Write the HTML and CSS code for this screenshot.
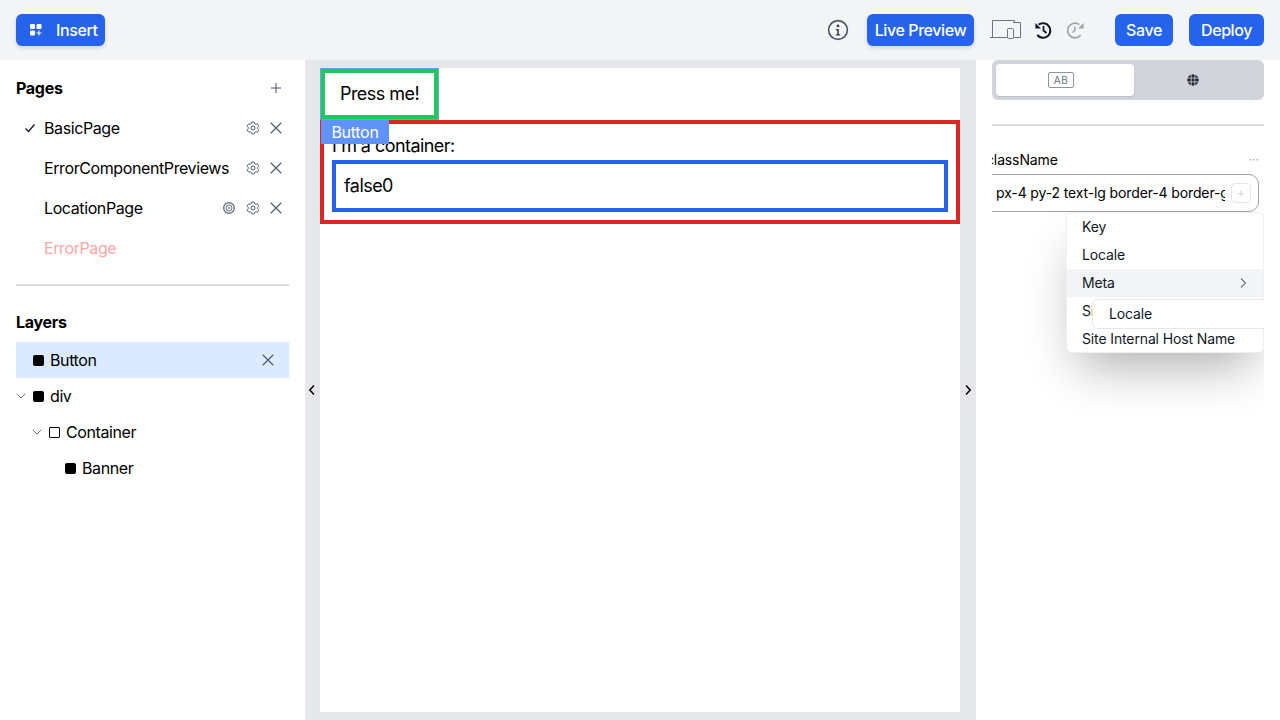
FILE: index.html
```html
<!DOCTYPE html>
<html lang="en">
<head>
<meta charset="utf-8">
<title>Page Builder</title>
<link rel="stylesheet" href="styles.css">
</head>
<body>
<svg class="defs" width="0" height="0" aria-hidden="true">
  <defs>
    <symbol id="i-gear" viewBox="0 0 24 24"><path fill="none" stroke="currentColor" stroke-width="1.5" stroke-linecap="round" stroke-linejoin="round" d="M9.594 3.94c.09-.542.56-.94 1.11-.94h2.593c.55 0 1.02.398 1.11.94l.213 1.281c.063.374.313.686.645.87.074.04.147.083.22.127.325.196.72.257 1.075.124l1.217-.456a1.125 1.125 0 0 1 1.37.49l1.296 2.247a1.125 1.125 0 0 1-.26 1.431l-1.003.827c-.293.241-.438.613-.43.992a7.723 7.723 0 0 1 0 .255c-.008.378.137.75.43.991l1.004.827c.424.35.534.955.26 1.43l-1.298 2.247a1.125 1.125 0 0 1-1.369.491l-1.217-.456c-.355-.133-.75-.072-1.076.124a6.47 6.47 0 0 1-.22.128c-.331.183-.581.495-.644.869l-.213 1.281c-.09.543-.56.94-1.11.94h-2.594c-.55 0-1.019-.398-1.11-.94l-.213-1.281c-.062-.374-.312-.686-.644-.87a6.52 6.52 0 0 1-.22-.127c-.325-.196-.72-.257-1.076-.124l-1.217.456a1.125 1.125 0 0 1-1.369-.49l-1.297-2.247a1.125 1.125 0 0 1 .26-1.431l1.004-.827c.292-.24.437-.613.43-.991a6.932 6.932 0 0 1 0-.255c.007-.38-.138-.751-.43-.992l-1.004-.827a1.125 1.125 0 0 1-.26-1.43l1.297-2.247a1.125 1.125 0 0 1 1.37-.491l1.216.456c.356.133.751.072 1.076-.124.072-.044.146-.086.22-.128.332-.183.582-.495.644-.869l.214-1.28Z"/><path fill="none" stroke="currentColor" stroke-width="1.5" d="M15 12a3 3 0 1 1-6 0 3 3 0 0 1 6 0Z"/></symbol>
    <symbol id="i-x" viewBox="0 0 14 14"><path fill="none" stroke="currentColor" stroke-width="1.1" stroke-linecap="round" d="M2 2l10 10M12 2L2 12"/></symbol>
    <symbol id="i-chev" viewBox="0 0 12 12"><path fill="none" stroke="currentColor" stroke-width="1" stroke-linecap="round" stroke-linejoin="round" d="M2 4l4 4 4-4"/></symbol>
  </defs>
</svg>
<header class="topbar">
  <button class="btn btn-shadow btn-insert">
    <svg class="ico-insert" viewBox="0 0 12 12" width="12" height="12"><rect x="0" y="0" width="5" height="5" rx="1.1" fill="#fff"/><rect x="6.500" y="0" width="5" height="5" rx="1.1" fill="#fff"/><rect x="0" y="6.500" width="5" height="5" rx="1.1" fill="#fff"/><path d="M9 6.500v5M6.500 9h5" stroke="#fff" stroke-width="1.100"/></svg>
    <span>Insert</span>
  </button>
  <div class="topbar-right">
    <svg class="ico-info" viewBox="0 0 22 22" width="22" height="22"><circle cx="11" cy="11" r="9.400" fill="none" stroke="#4b5563" stroke-width="1.600"/><circle cx="11" cy="6.900" r="1.400" fill="#374151"/><path d="M8.800 10h3v5.200h1.400v1.200H8.800v-1.200h1.400V11.200H8.800z" fill="#374151"/></svg>
    <button class="btn btn-shadow btn-live">Live Preview</button>
    <svg class="ico-devices" viewBox="0 1 31 21" width="31" height="21"><path d="M2.500 18V1.500h22V4M0 18.500h17" fill="none" stroke="#6b7280" stroke-width="1"/><path d="M23 3.500h7.500v15H23" fill="none" stroke="#6b7280" stroke-width="1"/><rect x="17.500" y="9.500" width="6" height="10" rx="1" fill="#f3f4f6" stroke="#6b7280" stroke-width="1"/></svg>
    <svg class="ico-clock" viewBox="0 0 20 20" width="20" height="20"><path d="M5.600 4.700A7.300 7.300 0 1 1 4.300 15" fill="none" stroke="#111827" stroke-width="2.100"/><path d="M2.400 3v5.600H8z" fill="#111827"/><path d="M10.500 6v4.500l3 2.500" fill="none" stroke="#111827" stroke-width="1.800"/></svg>
    <svg class="ico-clock" viewBox="0 0 20 20" width="20" height="20"><path d="M14.400 4.700A7.300 7.300 0 1 0 15.700 15" fill="none" stroke="#9ca3af" stroke-width="1.700"/><path d="M18.600 3v5.600H13z" fill="#9ca3af"/><path d="M9.800 6.500v4l-2.500 2" fill="none" stroke="#9ca3af" stroke-width="1.500"/></svg>
    <button class="btn btn-save">Save</button>
    <button class="btn btn-deploy">Deploy</button>
  </div>
</header>

<main class="workspace">
  <aside class="left">
    <div class="section-head">
      <h2>Pages</h2>
      <svg class="plus" viewBox="0 0 12 12" width="12" height="12"><path d="M6 1v10M1 6h10" stroke="#4b5563" stroke-width="1" fill="none"/></svg>
    </div>
    <ul class="pages">
      <li class="page">
        <svg class="check" viewBox="0 0 12 12" width="12" height="12"><path d="M1.500 6.500l3 3 6-7" fill="none" stroke="#111827" stroke-width="1.300"/></svg>
        <span class="page-name">BasicPage</span>
        <svg class="gear"><use href="#i-gear"/></svg>
        <svg class="x"><use href="#i-x"/></svg>
      </li>
      <li class="page">
        <span class="page-name">ErrorComponentPreviews</span>
        <svg class="gear"><use href="#i-gear"/></svg>
        <svg class="x"><use href="#i-x"/></svg>
      </li>
      <li class="page">
        <span class="page-name">LocationPage</span>
        <svg class="target" viewBox="0 0 12 12" width="12" height="12"><circle cx="6" cy="6" r="5.300" fill="none" stroke="#6b7280" stroke-width="1.400"/><circle cx="6" cy="6" r="3" fill="none" stroke="#6b7280" stroke-width="1"/><circle cx="6" cy="6" r="1.200" fill="#9ca3af"/></svg>
        <svg class="gear"><use href="#i-gear"/></svg>
        <svg class="x"><use href="#i-x"/></svg>
      </li>
      <li class="page page-error">
        <span class="page-name">ErrorPage</span>
      </li>
    </ul>
    <div class="rule"></div>
    <div class="section-head layers-head"><h2>Layers</h2></div>
    <ul class="layers">
      <li class="layer depth-0 selected"><span class="sq"></span><span class="layer-name">Button</span><svg class="x x-layer"><use href="#i-x"/></svg></li>
      <li class="layer depth-0"><svg class="chev"><use href="#i-chev"/></svg><span class="sq"></span><span class="layer-name">div</span></li>
      <li class="layer depth-1"><svg class="chev"><use href="#i-chev"/></svg><span class="sq sq-open"></span><span class="layer-name">Container</span></li>
      <li class="layer depth-2"><span class="sq"></span><span class="layer-name">Banner</span></li>
    </ul>
  </aside>

  <section class="canvas">
    <div class="rail rail-left">
      <svg viewBox="0 0 10 12" width="10" height="12"><path d="M7 1.500L2.800 6 7 10.500" fill="none" stroke="#000" stroke-width="1.500"/></svg>
    </div>
    <div class="page-frame">
      <button class="press">Press me!</button>
      <div class="red-box">
        <div class="container-text">I'm a container:</div>
        <div class="blue-box">false0</div>
      </div>
      <div class="sel-label">Button</div>
    </div>
    <div class="rail">
      <svg viewBox="0 0 10 12" width="10" height="12"><path d="M3 1.500L7.200 6 3 10.500" fill="none" stroke="#000" stroke-width="1.500"/></svg>
    </div>
  </section>

  <aside class="right">
    <div class="tabs">
      <div class="tab tab-active"><span class="ab">AB</span></div>
      <div class="tab">
        <svg viewBox="0 0 12 12" width="12" height="12"><circle cx="6" cy="6" r="5.800" fill="#1f2937"/><path d="M0 4.100h12M0 7.900h12M4.200 0v12M7.800 0v12" stroke="#d1d5db" stroke-width=".8" fill="none"/></svg>
      </div>
    </div>
    <div class="rule rule-right"></div>
    <div class="field">
      <div class="field-head"><span class="field-label">className</span><span class="dots">···</span></div>
      <div class="input-clip">
        <div class="input">
          <span class="input-text">px-4 py-2 text-lg border-4 border-green-500</span>
          <span class="input-add">+</span>
        </div>
      </div>
      <div class="menu">
        <div class="menu-row">Key</div>
        <div class="menu-row">Locale</div>
        <div class="menu-row menu-hover">Meta
          <svg viewBox="0 0 10 12" width="10" height="12"><path d="M3 1.500L7.500 6 3 10.500" fill="none" stroke="#6b7280" stroke-width="1.100"/></svg>
        </div>
        <div class="menu-row">Site</div>
        <div class="menu-row">Site Internal Host Name</div>
        <div class="submenu">Locale</div>
      </div>
    </div>
  </aside>
</main>
</body>
</html>
```
FILE: styles.css
```css
* { box-sizing: border-box; }
html, body { margin: 0; height: 100%; }
body {
  width: 1280px;
  height: 720px;
  overflow: hidden;
  background: #fff;
  color: #000;
  font-family: Inter, "Liberation Sans", sans-serif;
  font-size: 16px;
  line-height: 24px;
  letter-spacing: -.4px;
}
.defs { position: absolute; }
h2 { margin: 0; font-size: 16px; font-weight: 700; line-height: 24px; letter-spacing: -.3px; }
ul { list-style: none; margin: 0; padding: 0; }
button { font: inherit; letter-spacing: inherit; cursor: pointer; }

.topbar {
  height: 60px;
  background: #f3f4f6;
  display: flex;
  align-items: center;
  justify-content: space-between;
  padding: 0 16px;
}
.topbar-right { display: flex; align-items: center; }
.btn {
  height: 32px;
  border: 0;
  border-radius: 6px;
  background: #2563eb;
  color: #fff;
  font-weight: 500;
  padding: 0;
  display: flex;
  align-items: center;
  white-space: nowrap;
}
.btn-shadow { box-shadow: 0 2px 4px rgba(0,0,0,.14); }
.btn-insert { width: 89px; padding-left: 14px; }
.ico-insert { flex-shrink: 0; margin-right: 14px; }
.ico-info { margin-right: 18px; }
.btn-live { width: 107px; justify-content: center; }
.ico-devices { margin-left: 16px; }
.ico-clock { margin-left: 12px; }
.btn-save { margin-left: 30px; width: 58px; justify-content: center; }
.btn-deploy { margin-left: 16px; width: 75px; justify-content: center; }

.workspace {
  height: 660px;
  display: grid;
  grid-template-columns: 305px 671px 304px;
}

.left { padding: 16px 16px 0; }
.section-head {
  height: 24px;
  display: flex;
  align-items: center;
  justify-content: space-between;
  padding-right: 7px;
}
.plus { display: block; }
.pages { margin-top: 8px; }
.page {
  height: 40px;
  display: flex;
  align-items: center;
  padding-left: 28px;
  position: relative;
}
.page-name { flex: 1; }
.page-error { color: #fca5a5; }
.check { position: absolute; left: 8px; top: 14px; }
.target { margin-right: 10px; }
.gear { width: 16px; height: 16px; color: #4b5563; margin-right: 8px; }
.x { width: 14px; height: 14px; color: #4b5563; margin-right: 6px; }
.rule { height: 2px; background: #d9dbe0; margin-top: 16px; }
.layers-head { margin-top: 24px; }
.layers { margin-top: 8px; }
.layer {
  height: 36px;
  display: flex;
  align-items: center;
  position: relative;
}
.depth-0 { padding-left: 17px; }
.depth-1 { padding-left: 33px; }
.depth-2 { padding-left: 49px; }
.selected { background: #dbeafe; }
.sq {
  width: 11px;
  height: 11px;
  border-radius: 2px;
  background: #000;
  margin-right: 6px;
}
.sq-open { background: transparent; border: 1px solid #000; border-radius: 1px; }
.layer-name { flex: 1; }
.x-layer { margin-right: 14px; }
.chev {
  width: 12px;
  height: 12px;
  color: #6b7280;
  margin-left: -18px;
  margin-right: 6px;
}

.canvas {
  background: #e5e7eb;
  display: grid;
  grid-template-columns: 15px 640px 16px;
  padding: 8px 0;
}
.rail { display: flex; align-items: center; justify-content: center; }
.rail-left { padding-right: 2px; }
.page-frame {
  position: relative;
  background: #fff;
  font-size: 18px;
  line-height: 28px;
  letter-spacing: -.55px;
}
.press {
  display: block;
  background: #fff;
  border: 5px solid #22c55e;
  outline: 1.500px solid #60a5fa;
  outline-offset: -1.500px;
  padding: 7px 15px;
  font-size: 18px;
  line-height: 28px;
  color: #000;
  border-radius: 0;
}
.red-box { border: 4px solid #dc2626; padding: 8px; }
.blue-box { border: 4px solid #2563eb; padding: 8px; }
.sel-label {
  position: absolute;
  left: 1px;
  top: 52px;
  width: 68px;
  height: 24px;
  background: #5f93f9;
  color: #fff;
  font-size: 16px;
  line-height: 24px;
  letter-spacing: -.3px;
  text-align: center;
}

.right { padding: 0 16px; overflow: hidden; letter-spacing: -.13px; }
.tabs {
  height: 40px;
  background: #d1d5db;
  border-radius: 6px;
  padding: 4px;
  display: flex;
}
.tab { display: flex; align-items: center; justify-content: center; flex: 1; padding-right: 8px; }
.tab-active { flex: 0 0 138px; background: #fff; border-radius: 4px; box-shadow: 0 1px 2px rgba(0,0,0,.12); }
.ab {
  width: 26px;
  height: 16px;
  border: 1px solid #8a94a3;
  border-radius: 2px;
  color: #6b7280;
  font-size: 10px;
  line-height: 14px;
  letter-spacing: .5px;
  text-align: center;
}
.rule-right { margin-top: 24px; }
.field { position: relative; margin-top: 24px; }
.field-head {
  height: 20px;
  display: flex;
  align-items: center;
  justify-content: space-between;
  font-size: 14px;
  overflow: hidden;
  padding-right: 5px;
}
.field-label { margin-left: -6px; }
.dots { color: #9ca3af; font-size: 12px; letter-spacing: 0; }
.input-clip { overflow: hidden; margin-top: 4px; width: 267px; }
.input {
  height: 38px;
  width: 277px;
  margin-left: -10px;
  border: 1px solid #9ca3af;
  border-radius: 10px;
  display: flex;
  align-items: center;
  padding-left: 13px;
  font-size: 14px;
}
.input-text { width: 229px; white-space: nowrap; overflow: hidden; }
.input-add {
  width: 20px;
  height: 20px;
  margin-left: 6px;
  border: 1px solid #e5e7eb;
  border-radius: 4px;
  color: #d1d5db;
  font-size: 12px;
  line-height: 18px;
  text-align: center;
}
.menu {
  position: absolute;
  left: 74px;
  top: 62px;
  width: 198px;
  height: 141px;
  background: #fff;
  border: 1px solid #eef0f2;
  border-radius: 6px;
  box-shadow: 0 25px 50px -12px rgba(0,0,0,.32);
  clip-path: inset(-80px 0 -80px -80px);
  font-size: 14px;
  line-height: 20px;
}
.menu-row {
  height: 28px;
  padding: 0 15px;
  display: flex;
  align-items: center;
  justify-content: space-between;
  color: #111827;
}
.menu-hover { background: #f3f4f6; }
.submenu {
  position: absolute;
  left: 25px;
  top: 86px;
  width: 220px;
  height: 30px;
  background: #fff;
  border: 1px solid #e5e7eb;
  border-radius: 6px;
  padding: 4px 16px;
  color: #111827;
}
```
